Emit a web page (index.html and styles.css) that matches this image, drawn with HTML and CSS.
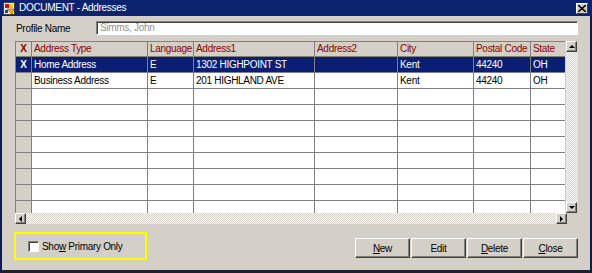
FILE: index.html
```html
<!DOCTYPE html>
<html lang="en">
<head>
    <meta charset="UTF-8">
    <title>DOCUMENT - Addresses</title>
    <link rel="stylesheet" href="styles.css">
</head>
<body>
    <div class="window">
        <div class="title-bar">
            <svg class="title-icon" width="13" height="13" viewBox="0 0 13 13">
                <rect x="0.5" y="0.5" width="11" height="12" fill="#e8e8e8" stroke="#404040"/>
                <rect x="2" y="2" width="4" height="4" fill="#d01010"/>
                <rect x="6" y="2" width="4" height="4" fill="#f0d000"/>
                <path d="M4 7 L9 12 L11 7 Z" fill="#f0c000" stroke="#a04000" stroke-width="0.6"/>
                <rect x="2" y="8" width="3" height="3" fill="#2040c0"/>
            </svg>
            <span class="title-text">DOCUMENT - Addresses</span>
            <span class="close-btn">
                <svg width="8" height="7" viewBox="0 0 8 7"><path d="M0 0 L8 7 M8 0 L0 7" stroke="#000" stroke-width="1.6"/></svg>
            </span>
        </div>

        <div class="content">
            <div class="profile-row">
                <label class="profile-label">Profile Name</label>
                <div class="profile-input">Simms, John</div>
            </div>

            <div class="grid">
                <div class="grid-main">
                    <div class="grid-view">
                        <table class="address-table">
                            <thead>
                                <tr>
                                    <th class="col-x x-head">X</th>
                                    <th class="col-type">Address Type</th>
                                    <th class="col-lang">Language</th>
                                    <th class="col-addr1">Address1</th>
                                    <th class="col-addr2">Address2</th>
                                    <th class="col-city">City</th>
                                    <th class="col-zip">Postal Code</th>
                                    <th class="col-state">State</th>
                                </tr>
                            </thead>
                            <tbody id="rows">
                                <tr class="selected">
                                    <td class="col-x">X</td>
                                    <td>Home Address</td>
                                    <td>E</td>
                                    <td>1302 HIGHPOINT ST</td>
                                    <td></td>
                                    <td>Kent</td>
                                    <td>44240</td>
                                    <td>OH</td>
                                </tr>
                                <tr>
                                    <td class="col-x"></td>
                                    <td>Business Address</td>
                                    <td>E</td>
                                    <td>201 HIGHLAND AVE</td>
                                    <td></td>
                                    <td>Kent</td>
                                    <td>44240</td>
                                    <td>OH</td>
                                </tr>
                            </tbody>
                        </table>
                    </div>
                    <div class="vscroll">
                        <span class="sb-btn"><span class="arrow-up"></span></span>
                        <span class="sb-track"></span>
                        <span class="sb-btn"><span class="arrow-down"></span></span>
                    </div>
                </div>
                <div class="hscroll">
                    <span class="sb-btn"><span class="arrow-left"></span></span>
                    <span class="sb-track"></span>
                    <span class="sb-btn"><span class="arrow-right"></span></span>
                </div>
            </div>

            <div class="bottom-bar">
                <div class="primary-box">
                    <span class="checkbox"></span>
                    <span>Sho<u>w</u> Primary Only</span>
                </div>
                <div class="buttons">
                    <button class="btn"><u>N</u>ew</button>
                    <button class="btn">Edit</button>
                    <button class="btn"><u>D</u>elete</button>
                    <button class="btn"><u>C</u>lose</button>
                </div>
            </div>
        </div>
    </div>

    <script>
        // filas vacias para rellenar la tabla
        const rows = document.getElementById('rows');
        for (let i = 0; i < 8; i++) {
            const tr = document.createElement('tr');
            tr.innerHTML = '<td class="col-x"></td>' + '<td></td>'.repeat(7);
            rows.appendChild(tr);
        }
    </script>
</body>
</html>
```

FILE: styles.css
```css
:root {
    --face: #d4d0c8;
    --shadow: #808080;
    --dark: #404040;
    --navy: #0a1f74;
    --header-text: #8b0000;
}
body {
    margin: 0;
    font-family: 'Liberation Sans', Arial, sans-serif;
    font-size: 10px;
    letter-spacing: -0.3px;
    color: #000;
}
.window {
    width: 592px;
    height: 273px;
    box-sizing: border-box;
    background-color: var(--face);
    border-left: 2px solid #0c1c50;
    border-right: 2px solid #0c1c50;
    border-bottom: 3px solid #202030;
    display: flex;
    flex-direction: column;
}
.title-bar {
    height: 16px;
    background-color: #0c2470;
    color: white;
    display: flex;
    align-items: center;
    margin: 0 -2px;
    padding: 0 4px 0 3px;
}
.title-icon {
    margin-right: 3px;
}
.title-text {
    flex: 1;
    line-height: 16px;
}
.close-btn {
    width: 12px;
    height: 11px;
    box-sizing: border-box;
    background-color: var(--face);
    border: 1px solid;
    border-color: #fff var(--dark) var(--dark) #fff;
    display: flex;
    align-items: center;
    justify-content: center;
    margin-top: 1px;
}
.content {
    flex: 1;
    padding: 0 12px 0 13px;
}
.profile-row {
    display: flex;
    align-items: center;
    margin-top: 5px;
}
.profile-label {
    width: 80px;
    padding-left: 1px;
}
.profile-input {
    flex: 1;
    height: 14px;
    box-sizing: border-box;
    background-color: white;
    border: 1px solid;
    border-color: var(--shadow) #fff #fff var(--shadow);
    box-shadow: inset 1px 1px 0 var(--dark);
    color: #909090;
    padding-left: 3px;
    line-height: 12px;
}
.grid {
    margin-top: 6px;
    width: 563px;
}
.grid-main {
    display: flex;
    height: 172px;
}
.grid-view {
    width: 551px;
    overflow: hidden;
    background-color: white;
}
.address-table {
    border-collapse: separate;
    border-spacing: 0;
    table-layout: fixed;
    width: 551px;
    border-left: 1px solid var(--shadow);
    border-top: 1px solid var(--shadow);
}
.address-table th,
.address-table td {
    box-sizing: border-box;
    border-right: 1px solid var(--shadow);
    border-bottom: 1px solid var(--shadow);
    padding: 0 2px;
    text-align: left;
    white-space: nowrap;
    overflow: hidden;
    height: 16px;
    line-height: 14px;
    font-weight: normal;
}
.address-table th {
    background-color: var(--face);
    color: var(--header-text);
    height: 15px;
}
.address-table td.col-x {
    background-color: var(--face);
    text-align: center;
    font-weight: bold;
}
.address-table th.x-head {
    font-weight: bold;
    text-align: center;
}
.col-x { width: 16px; }
.col-type { width: 116px; }
.col-lang { width: 46px; }
.col-addr1 { width: 121px; }
.col-addr2 { width: 83px; }
.col-city { width: 76px; }
.col-zip { width: 57px; }
.col-state { width: 36px; }
.address-table tr.selected td,
.address-table tr.selected td.col-x {
    background-color: var(--navy);
    color: white;
}
.vscroll {
    width: 12px;
    display: flex;
    flex-direction: column;
    padding-left: 1px;
}
.hscroll {
    display: flex;
    height: 11px;
    width: 552px;
}
.sb-btn {
    width: 11px;
    height: 11px;
    box-sizing: border-box;
    flex-shrink: 0;
    background-color: var(--face);
    border: 1px solid;
    border-color: #fff var(--dark) var(--dark) #fff;
    box-shadow: inset -1px -1px 0 var(--shadow);
    display: flex;
    align-items: center;
    justify-content: center;
}
.sb-track {
    flex: 1;
    background-color: #fff;
    background-image: repeating-conic-gradient(var(--face) 0 25%, #fff 0 50%);
    background-size: 2px 2px;
}
.arrow-up,
.arrow-down,
.arrow-left,
.arrow-right {
    width: 0;
    height: 0;
    border: 3px solid transparent;
}
.arrow-up { border-bottom-color: #000; border-top-width: 0; }
.arrow-down { border-top-color: #000; border-bottom-width: 0; }
.arrow-left { border-right-color: #000; border-left-width: 0; }
.arrow-right { border-left-color: #000; border-right-width: 0; }
.bottom-bar {
    display: flex;
    justify-content: space-between;
    align-items: flex-start;
    margin-top: 8px;
}
.primary-box {
    width: 133px;
    height: 28px;
    box-sizing: border-box;
    border: 2px solid #ffff00;
    margin-left: -1px;
    display: flex;
    align-items: center;
    padding-left: 12px;
    gap: 3px;
}
.checkbox {
    width: 11px;
    height: 11px;
    box-sizing: border-box;
    background-color: white;
    border: 1px solid;
    border-color: var(--shadow) #fff #fff var(--shadow);
    box-shadow: inset 1px 1px 0 var(--dark);
}
.buttons {
    display: flex;
    gap: 1px;
    margin-top: 6px;
}
.btn {
    width: 55px;
    height: 20px;
    box-sizing: border-box;
    font-family: inherit;
    font-size: 10px;
    letter-spacing: inherit;
    background-color: var(--face);
    border: 1px solid;
    border-color: #fff var(--dark) var(--dark) #fff;
    box-shadow: inset -1px -1px 0 var(--shadow);
    padding: 0;
    color: #000;
}
```
